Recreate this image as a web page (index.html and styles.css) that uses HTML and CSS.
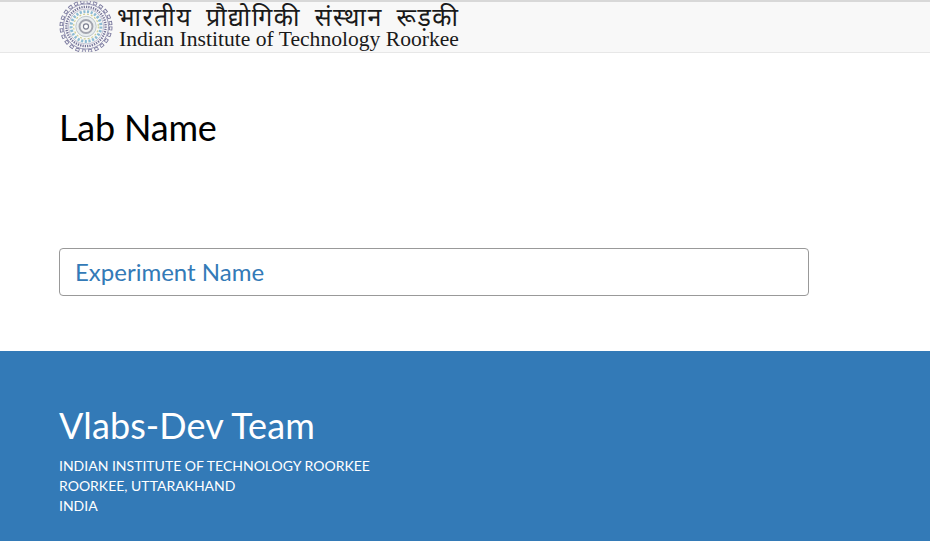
FILE: index.html
```html
<!DOCTYPE html>
<html lang="en">
<head>
  <meta charset="UTF-8" />
  <title>Lab Name</title>
  <link rel="stylesheet" href="styles.css">
</head>
<body>
  <header class="top-bar">
    <div class="logo">
      <svg class="seal" viewBox="0 0 56 52" aria-hidden="true">
        <!-- gear teeth, hollow -->
        <circle cx="28" cy="26" r="25.2" fill="none" stroke="#77769c" stroke-width="3.6" stroke-dasharray="4 2.6"/>
        <circle cx="28" cy="26" r="25.2" fill="none" stroke="#f2f2f4" stroke-width="1.8" stroke-dasharray="2.6 4" stroke-dashoffset="-0.7"/>
        <circle cx="28" cy="26" r="23" fill="#f7f7f8" stroke="#7f7ea3" stroke-width="0.8"/>
        <!-- lettering band -->
        <circle cx="28" cy="26" r="20" fill="none" stroke="#77769a" stroke-width="2.4" stroke-dasharray="1.3 1.1"/>
        <circle cx="28" cy="26" r="17.8" fill="#f8f8f6" stroke="#9a99b5" stroke-width="0.6"/>
        <circle cx="28" cy="26" r="15.2" fill="none" stroke="#8dbbd3" stroke-width="3" stroke-dasharray="2.2 1.6"/>
        <circle cx="28" cy="26" r="12.6" fill="none" stroke="#cdd093" stroke-width="1.2" stroke-dasharray="2 2"/>
        <circle cx="28" cy="26" r="10.4" fill="#e9eef0" stroke="#b0bbc0" stroke-width="0.8"/>
        <circle cx="28" cy="26" r="6.6" fill="#f3f3f3" stroke="#a3a6b0" stroke-width="2"/>
        <circle cx="28" cy="26" r="2.6" fill="#fff" stroke="#7c7f90" stroke-width="1.2"/>
      </svg>
      <div class="logo-text">
        <div class="logo-hindi">भारतीय प्रौद्योगिकी संस्थान रूड़की</div>
        <div class="logo-english">Indian Institute of Technology Roorkee</div>
      </div>
    </div>
  </header>

  <main class="content">
    <h1>Lab Name</h1>
    <a class="experiment" href="#">Experiment Name</a>
  </main>

  <footer class="footer">
    <h2>Vlabs-Dev Team</h2>
    <p>INDIAN INSTITUTE OF TECHNOLOGY ROORKEE</p>
    <p>ROORKEE, UTTARAKHAND</p>
    <p>INDIA</p>
  </footer>
</body>
</html>
```

FILE: styles.css
```css
body {
  margin: 0;
  font-family: Lato, sans-serif;
  background: #fff;
  color: #000;
}
.top-bar {
  height: 50px;
  background: #f8f8f8;
  border-top: 2px solid #d8d8d8;
  border-bottom: 1px solid #e7e7e7;
  padding-left: 58px;
}
.logo {
  display: flex;
  align-items: flex-start;
  height: 100%;
}
.seal {
  width: 56px;
  height: 51px;
  margin-top: -1px;
  flex-shrink: 0;
}
.logo-text {
  margin-left: 3px;
  color: #1a1a1a;
  white-space: nowrap;
}
.logo-hindi {
  font-family: "Noto Sans", "Liberation Serif", serif;
  font-size: 25px;
  line-height: 28px;
  letter-spacing: 1.4px;
  word-spacing: 6px;
}
.logo-english {
  margin-left: 2px;
  font-family: "Liberation Serif", serif;
  font-size: 21.6px;
  line-height: 18px;
}
.content {
  padding: 0 121px 55px 59px;
}
h1 {
  margin: 0;
  padding-top: 51px;
  font-size: 36px;
  font-weight: 400;
  line-height: 46px;
  letter-spacing: -0.2px;
}
.experiment {
  display: block;
  margin-top: 98px;
  height: 46px;
  padding: 0 15px;
  border: 1px solid #999;
  border-radius: 4px;
  color: #337ab7;
  font-size: 24px;
  line-height: 45px;
  text-decoration: none;
}
.footer {
  height: 190px;
  box-sizing: border-box;
  padding: 51px 59px 0;
  background: #337ab7;
  color: #fff;
}
.footer h2 {
  margin: 0 0 8px;
  font-size: 36px;
  font-weight: 400;
  line-height: 46px;
  letter-spacing: 0.08px;
}
.footer p {
  margin: 0;
  font-size: 14px;
  line-height: 20px;
}
```
